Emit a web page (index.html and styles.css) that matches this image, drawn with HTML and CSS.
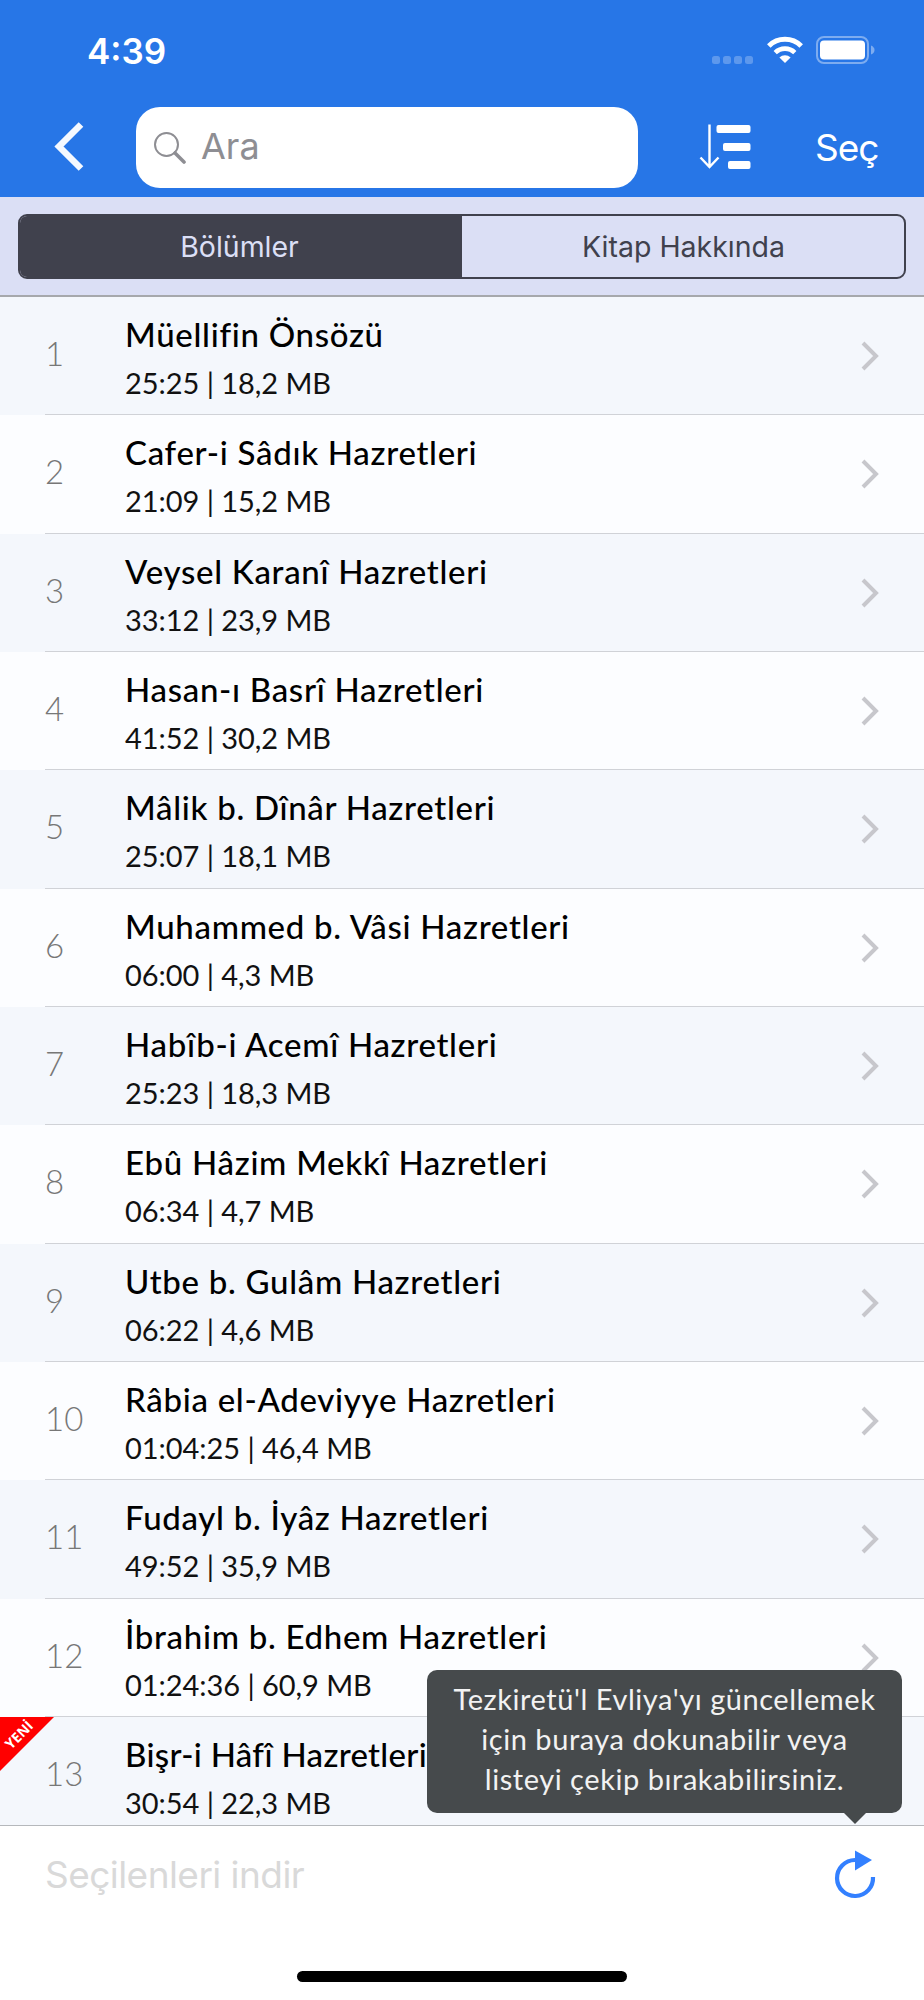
FILE: index.html
```html
<!DOCTYPE html>
<html lang="tr">
<head>
    <meta charset="UTF-8">
    <meta name="viewport" content="width=device-width, initial-scale=1.0">
    <title>Tezkiretü'l Evliya</title>
    <link rel="stylesheet" href="styles.css">
</head>
<body>

    <!-- shared chevron -->
    <svg class="defs" width="0" height="0">
        <symbol id="chevron" viewBox="0 0 18 30">
            <path d="M2 2 L15 15 L2 28" fill="none" stroke="#c7c7cc" stroke-width="4"/>
        </symbol>
    </svg>

    <header>
        <div class="status-bar">
            <span class="time">4:39</span>
            <div class="status-icons">
                <svg width="42" height="8" viewBox="0 0 42 8" fill="#fff" fill-opacity="0.25">
                    <rect x="0" width="8" height="8" rx="2.5"/>
                    <rect x="11" width="8" height="8" rx="2.5"/>
                    <rect x="22" width="8" height="8" rx="2.5"/>
                    <rect x="33" width="8" height="8" rx="2.5"/>
                </svg>
                <svg class="wifi" width="38" height="28" viewBox="0 0 38 28" fill="none" stroke="#fff">
                    <path d="M2.8 10 A23 23 0 0 1 35.2 10" stroke-width="5"/>
                    <path d="M9.2 16.6 A14 14 0 0 1 28.8 16.6" stroke-width="4.6"/>
                    <path d="M13.4 21.6 A8 8 0 0 1 24.6 21.6 L19 27 Z" fill="#fff" stroke="none"/>
                </svg>
                <svg class="battery" width="60" height="28" viewBox="0 0 60 28">
                    <rect x="1" y="1" width="51" height="26" rx="7" fill="none" stroke="#fff" stroke-opacity="0.4" stroke-width="2"/>
                    <rect x="4" y="4.5" width="45" height="19" rx="4" fill="#fff"/>
                    <path d="M55 9.5 Q58.5 11 58.5 14 Q58.5 17 55 18.5 Z" fill="#fff" fill-opacity="0.4"/>
                </svg>
            </div>
        </div>
        <div class="nav-bar">
            <svg class="back" width="32" height="50" viewBox="0 0 32 50">
                <path d="M27 2.5 L5 24.5 L27 46.5" fill="none" stroke="#f5f9ff" stroke-width="6.5"/>
            </svg>
            <div class="search">
                <svg width="32" height="32" viewBox="0 0 32 32" fill="none" stroke="#8e8e93">
                    <circle cx="12.5" cy="12.5" r="11.5" stroke-width="2"/>
                    <path d="M21 21 L30 30" stroke-width="3.6" stroke-linecap="round"/>
                </svg>
                <span>Ara</span>
            </div>
            <svg class="sort" width="52" height="46" viewBox="0 0 52 46">
                <path d="M10.5 0.5 V43 M1.5 33.5 L10.5 43 L19.5 33.5" fill="none" stroke="#fff" stroke-width="2.4"/>
                <rect x="17.5" y="1" width="34" height="8" rx="2" fill="#fff"/>
                <rect x="24" y="19" width="27.5" height="8" rx="2" fill="#fff"/>
                <rect x="29" y="37" width="22.5" height="8" rx="2" fill="#fff"/>
            </svg>
            <span class="select">Seç</span>
        </div>
    </header>

    <div class="segment-bar">
        <div class="segments">
            <div class="segment active">Bölümler</div>
            <div class="segment">Kitap Hakkında</div>
        </div>
    </div>

    <ul class="list">
        <li><div class="row"><span class="num">1</span><div class="info"><h2>Müellifin Önsözü</h2><p>25:25 | 18,2 MB</p></div><svg class="chevron"><use href="#chevron"/></svg></div></li>
        <li><div class="row"><span class="num">2</span><div class="info"><h2>Cafer-i Sâdık Hazretleri</h2><p>21:09 | 15,2 MB</p></div><svg class="chevron"><use href="#chevron"/></svg></div></li>
        <li><div class="row"><span class="num">3</span><div class="info"><h2>Veysel Karanî Hazretleri</h2><p>33:12 | 23,9 MB</p></div><svg class="chevron"><use href="#chevron"/></svg></div></li>
        <li><div class="row"><span class="num">4</span><div class="info"><h2>Hasan-ı Basrî Hazretleri</h2><p>41:52 | 30,2 MB</p></div><svg class="chevron"><use href="#chevron"/></svg></div></li>
        <li><div class="row"><span class="num">5</span><div class="info"><h2>Mâlik b. Dînâr Hazretleri</h2><p>25:07 | 18,1 MB</p></div><svg class="chevron"><use href="#chevron"/></svg></div></li>
        <li><div class="row"><span class="num">6</span><div class="info"><h2>Muhammed b. Vâsi Hazretleri</h2><p>06:00 | 4,3 MB</p></div><svg class="chevron"><use href="#chevron"/></svg></div></li>
        <li><div class="row"><span class="num">7</span><div class="info"><h2>Habîb-i Acemî Hazretleri</h2><p>25:23 | 18,3 MB</p></div><svg class="chevron"><use href="#chevron"/></svg></div></li>
        <li><div class="row"><span class="num">8</span><div class="info"><h2>Ebû Hâzim Mekkî Hazretleri</h2><p>06:34 | 4,7 MB</p></div><svg class="chevron"><use href="#chevron"/></svg></div></li>
        <li><div class="row"><span class="num">9</span><div class="info"><h2>Utbe b. Gulâm Hazretleri</h2><p>06:22 | 4,6 MB</p></div><svg class="chevron"><use href="#chevron"/></svg></div></li>
        <li><div class="row"><span class="num">10</span><div class="info"><h2>Râbia el-Adeviyye Hazretleri</h2><p>01:04:25 | 46,4 MB</p></div><svg class="chevron"><use href="#chevron"/></svg></div></li>
        <li><div class="row"><span class="num">11</span><div class="info"><h2>Fudayl b. İyâz Hazretleri</h2><p>49:52 | 35,9 MB</p></div><svg class="chevron"><use href="#chevron"/></svg></div></li>
        <li><div class="row"><span class="num">12</span><div class="info"><h2>İbrahim b. Edhem Hazretleri</h2><p>01:24:36 | 60,9 MB</p></div><svg class="chevron"><use href="#chevron"/></svg></div></li>
        <li><span class="ribbon"><b>YENİ</b></span><div class="row"><span class="num">13</span><div class="info"><h2>Bişr-i Hâfî Hazretleri</h2><p>30:54 | 22,3 MB</p></div></div></li>
    </ul>

    <footer>
        <div class="toolbar">
            <span class="download">Seçilenleri indir</span>
            <svg class="refresh" width="42" height="50" viewBox="0 0 42 50">
                <path d="M39 27 A18 18 0 1 1 21 10" fill="none" stroke="#3380ff" stroke-width="4.2"/>
                <path d="M21 0.5 L38 10 L21 20.5 Z" fill="#3380ff"/>
            </svg>
        </div>
        <div class="home-indicator"></div>
        <div class="tooltip">Tezkiretü'l Evliya'yı güncellemek<br>için buraya dokunabilir veya<br>listeyi çekip bırakabilirsiniz.</div>
    </footer>

</body>
</html>
```
FILE: styles.css
```css
* {
    box-sizing: border-box;
}

body {
    margin: 0;
    width: 924px;
    height: 2000px;
    display: flex;
    flex-direction: column;
    overflow: hidden;
    background-color: #fff;
    font-family: Inter, "Liberation Sans", sans-serif;
}

.defs {
    position: absolute;
}

header {
    height: 197px;
    background-color: #2776e7;
    color: #fff;
}

.status-bar {
    display: flex;
    justify-content: space-between;
    height: 98px;
    padding: 30px 48px 0 87px;
}

.time {
    font-size: 35px;
    font-weight: 600;
    line-height: 43px;
}

.status-icons {
    display: flex;
    align-items: flex-end;
    height: 35px;
}

.status-icons svg {
    margin-bottom: 1px;
}

.wifi {
    margin-left: 12px;
}

.battery {
    margin-left: 12px;
}

.nav-bar {
    display: flex;
    align-items: center;
    height: 99px;
    padding: 0 0 0 54px;
}

.back {
    margin-bottom: 1px;
}

.search {
    display: flex;
    align-items: center;
    width: 502px;
    height: 81px;
    margin-left: 50px;
    padding-left: 18px;
    border-radius: 24px;
    background-color: #fff;
    color: #8e8e93;
    font-size: 36px;
}

.search span {
    margin-left: 15px;
    padding-bottom: 3px;
}

.sort {
    margin-left: 61px;
    margin-bottom: 2px;
}

.select {
    margin-left: 64px;
    font-size: 37px;
    letter-spacing: -1px;
}

.segment-bar {
    height: 100px;
    padding: 17px 18px 0;
    background-color: #dbdff5;
    border-bottom: 2px solid #a6a8ac;
}

.segments {
    display: flex;
    height: 65px;
    border: 2px solid #40414d;
    border-radius: 9px;
    overflow: hidden;
}

.segment {
    width: 50%;
    padding-left: 1px;
    color: #40414d;
    font-size: 28.5px;
    line-height: 61px;
    text-align: center;
}

.segment.active {
    padding: 0 3px 0 0;
    background-color: #40414d;
    color: #dbdff5;
}

.list {
    flex: 1;
    min-height: 0;
    margin: 0;
    padding: 0;
    overflow: hidden;
    list-style: none;
    font-family: Lato, "Open Sans", sans-serif;
}

.list li {
    position: relative;
    height: 118.33px;
    padding-left: 45px;
    background-color: #fcfdff;
}

.list li:nth-child(odd) {
    background-color: #f4f7fc;
}

.row {
    display: flex;
    height: 100%;
    border-bottom: 1px solid #d0d2d7;
}

.num {
    width: 80px;
    padding-top: 36px;
    color: #777;
    font-size: 33px;
    font-weight: 300;
    line-height: 40px;
}

.info {
    flex: 1;
    padding-top: 17px;
}

.info h2 {
    margin: 0;
    color: #000;
    font-size: 33px;
    font-weight: 500;
    line-height: 40px;
    letter-spacing: 0.7px;
    white-space: nowrap;
}

/* keep the whole title clear of the tooltip */
.list li:last-child h2 {
    letter-spacing: 0.3px;
}

.info p {
    margin: 10px 0 0;
    color: #111;
    font-size: 29px;
    line-height: 38px;
    letter-spacing: -0.05px;
    white-space: nowrap;
}

.chevron {
    width: 18px;
    height: 30px;
    margin: 44px 45px 0 0;
}

.ribbon {
    position: absolute;
    top: 0;
    left: 0;
    width: 54px;
    height: 54px;
    background-color: #f00;
    clip-path: polygon(0 0, 100% 0, 0 100%);
    color: #fff;
}

.ribbon b {
    position: absolute;
    top: 10px;
    left: -11px;
    width: 60px;
    font: 700 14px/16px "Open Sans", sans-serif;
    text-align: center;
    transform: rotate(-45deg);
}

footer {
    position: relative;
    height: 175px;
    border-top: 1px solid #b5b8bc;
    background-color: #fff;
}

.toolbar {
    display: flex;
    justify-content: space-between;
    padding: 24px 48px 0 45px;
}

.download {
    color: #d9d9d9;
    font-size: 37px;
    line-height: 50px;
    letter-spacing: -0.55px;
}

.home-indicator {
    width: 330px;
    height: 11px;
    margin: 71px auto 0;
    border-radius: 6px;
    background-color: #000;
}

.tooltip {
    position: absolute;
    right: 22px;
    bottom: 187px;
    width: 475px;
    height: 143px;
    padding-top: 9px;
    border-radius: 10px;
    background-color: #464a4c;
    color: #f2f2f2;
    font-family: Lato, "Open Sans", sans-serif;
    font-size: 29px;
    line-height: 40px;
    letter-spacing: 0.55px;
    text-align: center;
    white-space: nowrap;
}

.tooltip::after {
    content: "";
    position: absolute;
    top: 100%;
    right: 36px;
    border: 11px solid transparent;
    border-top-color: #464a4c;
    border-bottom: none;
}
```
